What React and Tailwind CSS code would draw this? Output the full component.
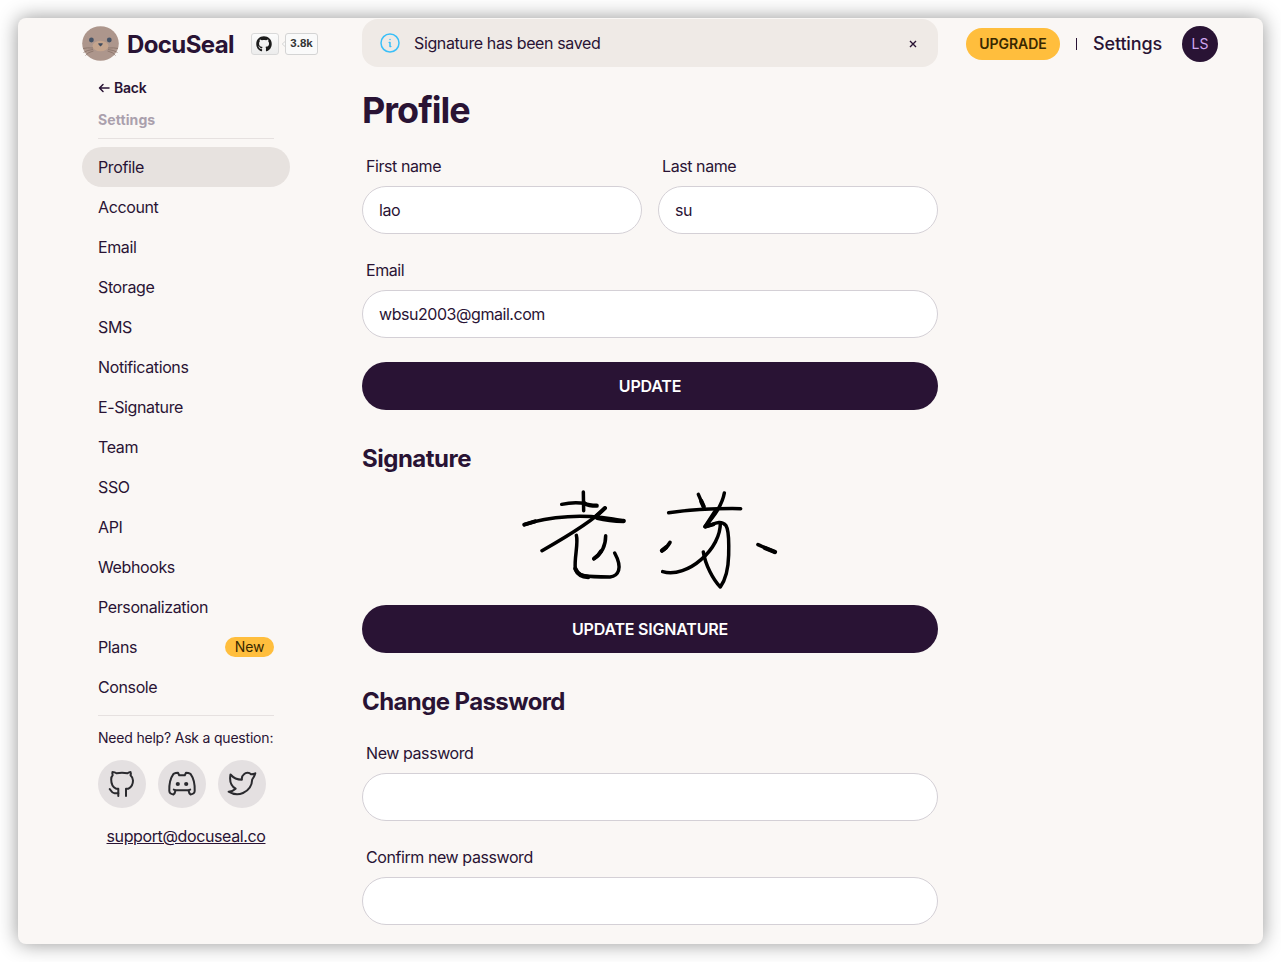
import React from "react";
import { FaGithub } from "react-icons/fa";

const NAV = [
  "Profile", "Account", "Email", "Storage", "SMS", "Notifications", "E-Signature",
  "Team", "SSO", "API", "Webhooks", "Personalization", "Plans", "Console",
];

function SealLogo() {
  return (
    <svg viewBox="0 0 37 35" className="-mt-0.5 h-[35px] w-[37px] shrink-0">
      <ellipse cx="18.5" cy="17.5" rx="18.3" ry="17.2" fill="#ad968c" />
      <ellipse cx="18.5" cy="20" rx="8" ry="5.2" fill="#c4a48d" />
      <circle cx="9.4" cy="14" r="2.4" fill="#465366" />
      <circle cx="27.3" cy="14" r="2.4" fill="#465366" />
      <path d="M16.2 17.3h4.6q.2 1.6-2.3 3.2q-2.5-1.6-2.3-3.2z" fill="#414c5e" />
      <path
        d="M11 22Q5 21.500 1 22.500M11 23.500Q5 24 1.500 26.500M11.500 25Q6 26 3.500 29.500M26 22Q32 21.500 36 22.500M26 23.500Q32 24 35.500 26.500M25.500 25Q31 26 33.500 29.500"
        fill="none" stroke="#806a60" strokeWidth=".7"
      />
    </svg>
  );
}

function Header() {
  return (
    <header className="flex h-[52px] shrink-0 items-center pl-16">
      <div className="flex w-[280px] items-center">
        <SealLogo />
        <span className="ml-2 mt-px w-[124px] text-2xl font-bold tracking-[-0.6px]">DocuSeal</span>
        <span className="flex h-[22px] w-7 items-center justify-center rounded-[3px] border border-[#d9d9d9] bg-linear-to-b from-[#fcfcfc] to-[#ececec]">
          <FaGithub className="mr-0.5 size-4 text-[#1c1c1c]" />
        </span>
        <svg viewBox="0 0 6 10" className="-mr-px ml-[2px] h-2.5 w-[5px] shrink-0">
          <path d="M6 1L1.500 5L6 9" fill="#fafafa" stroke="#cfcfcf" />
        </svg>
        <span className="flex h-[22px] w-[33px] items-center justify-center rounded-[3px] border border-[#d4d4d4] bg-[#fafafa] font-['Liberation_Sans',sans-serif] text-[11.5px] font-bold text-[#333]">3.8k</span>
      </div>
      <div className="mt-px flex h-12 w-[576px] items-center self-start rounded-2xl bg-[#efeae6] pl-4 pr-[21px]">
        <svg viewBox="0 0 24 24" className="size-6" fill="none" stroke="#3abff8" strokeWidth="1.5" strokeLinecap="round" strokeLinejoin="round">
          <circle cx="12" cy="12" r="9" />
          <path d="M12 8.500h.01M11.200 11.500h.8v4h.8" />
        </svg>
        <span className="ml-3 flex-1 text-base tracking-[-0.38px]">Signature has been saved</span>
        <svg viewBox="0 0 8 8" className="mt-0.5 size-2">
          <path d="M1 1L7 7M7 1L1 7" stroke="#291334" strokeWidth="1.4" />
        </svg>
      </div>
      <div className="ml-7 flex h-8 w-[94px] items-center justify-center rounded-full bg-[#ffbe3d] text-sm font-semibold tracking-[-0.05px] text-[#382800]">UPGRADE</div>
      <div className="ml-4 h-3 w-px bg-[#291334]" />
      <span className="ml-4 w-[89px] text-lg font-medium tracking-[-0.15px]">Settings</span>
      <div className="flex size-9 items-center justify-center rounded-full bg-[#291334] text-sm text-[#d1a6f0]">LS</div>
    </header>
  );
}

function RoundIcon({ children }) {
  return (
    <span className="size-12 rounded-full bg-[#e4e0e1]">
      <svg viewBox="0 0 48 48" className="size-12" fill="none" stroke="#2a2a2e" strokeWidth="2" strokeLinecap="round" strokeLinejoin="round">
        {children}
      </svg>
    </span>
  );
}

function Sidebar() {
  return (
    <aside className="w-[208px] shrink-0 pt-2">
      <div className="px-4">
        <div className="flex h-5 items-center text-sm font-semibold tracking-[-0.2px]">
          <svg viewBox="0 0 12 10" className="mr-1 h-2.5 w-3" fill="none" stroke="#291334" strokeWidth="1.5" strokeLinecap="round" strokeLinejoin="round">
            <path d="M11 5H1.500M5 1.500L1.500 5L5 8.500" />
          </svg>
          Back
        </div>
        <div className="mt-3 h-5 text-sm font-bold leading-5 tracking-[0.1px] text-[#aaa0ad]">Settings</div>
        <div className="mt-2 h-px bg-[#e6e1e0]" />
      </div>
      <nav className="mt-2">
        {NAV.map((name, i) => (
          <div
            key={name}
            className={
              "flex h-10 items-center justify-between rounded-full px-4 text-base tracking-[-0.38px] " +
              (i === 0 ? "bg-[#e7e2df]" : "")
            }
          >
            {name}
            {name === "Plans" && (
              <span className="flex h-5 w-[49px] items-center justify-center rounded-full bg-[#ffbe3d] text-sm tracking-[-0.1px] text-[#382800]">New</span>
            )}
          </div>
        ))}
      </nav>
      <div className="px-4">
        <div className="mt-2 h-px bg-[#e6e1e0]" />
        <div className="mt-3 h-5 whitespace-nowrap text-sm leading-5 tracking-[-0.2px]">Need help? Ask a question:</div>
        <div className="mt-3 flex gap-3">
          <RoundIcon>
            <path d="M20.300 36V28.700H18C15.500 27.500 13.200 24 13.200 19.500C13.200 17.500 13.800 16 14.700 15.200C14.200 14 14.200 12.800 14.500 11.900C16 11.900 17.300 12.300 18.500 13.300C22 12.700 26 12.700 29.500 13.300C30.700 12.300 31.500 11.900 32.500 11.900C33 13 33 14 32.500 15.200C34.500 17 35 18.500 35 20.500C35 24 33.500 27 30.500 28.700H28V36" />
            <path d="M11.700 29C13 30 13.500 33.200 16.500 33.200H20.300" />
          </RoundIcon>
          <RoundIcon>
            <path d="M17.500 30.300H30.500C30.800 32 31 33.500 32.500 34.500C34.500 34.200 36.500 33.800 36.700 31C36.900 25 35.500 18 32.500 13.900C31 13.100 29.500 12.800 28 12.800L26.800 15.300H21.200L20 12.800C18.500 12.800 17 13.100 15.500 13.900C12.500 18 11.100 25 11.300 31C11.500 33.800 13.500 34.200 15.500 34.500C17 33.500 17.200 32 17.500 30.300M17.500 30.300L15.800 29.600M30.500 30.300L32.200 29.600" />
            <circle cx="19.800" cy="24" r="2.100" fill="#2a2a2e" stroke="none" />
            <circle cx="28.200" cy="24" r="2.100" fill="#2a2a2e" stroke="none" />
          </RoundIcon>
          <RoundIcon>
            <path d="M37.300 13.300C36 14 34.500 14.200 33 14.200C31.300 12.500 28 12.300 26 14.200C24.300 15.500 23.600 17.500 23.900 19.700C19.500 19.700 15.500 18 12.500 14.500C11.500 20 12.300 25.500 17.600 28.700C15.500 30.700 13 31.600 10.600 31.700C15.500 34.700 20.500 35 25 33C30.500 30.500 34 25.500 34.200 19.500C35.600 17.600 36.700 15.700 37.300 13.300Z" />
          </RoundIcon>
        </div>
        <div className="mt-4 text-center text-base tracking-[-0.38px] underline">support@docuseal.co</div>
      </div>
    </aside>
  );
}

function Field({ label, value }) {
  return (
    <label className="block flex-1">
      <span className="flex h-10 items-center px-1 text-base tracking-[-0.42px]">{label}</span>
      <span className="flex h-12 items-center rounded-full border border-[#d4d0d6] bg-white px-4 text-base tracking-[-0.45px]">{value}</span>
    </label>
  );
}

function Button({ children }) {
  return (
    <button className="block h-12 w-full rounded-full bg-[#291334] text-base font-semibold tracking-[-0.2px] text-white">{children}</button>
  );
}

function Signature() {
  return (
    <svg viewBox="0 0 840 360" className="mx-auto h-[120px] w-[280px]" fill="none" stroke="#000" strokeWidth="10.5" strokeLinecap="round" strokeLinejoin="round">
      <path d="M220 36L221 92" />
      <path d="M155 73C180 67 205 67 225 70" />
      <path d="M222 70C232 75 246 77 260 77" strokeWidth="13" />
      <path d="M43 134C110 110 225 98 341 123" />
      <path d="M43 134L75 124" strokeWidth="12" />
      <path d="M285 84C250 122 170 170 96 212" />
      <path d="M285 84L258 109" strokeWidth="12" />
      <path d="M262 114C285 120 315 123 341 123" strokeWidth="13" />
      <path d="M199 166C206 190 192 235 196 266C202 290 230 291 300 291C325 288 339 265 314 219" />
      <path d="M287 167C287 192 279 218 252 236" />
      <path d="M272 215C266 226 260 231 252 236" strokeWidth="12" />
      <path d="M196 266C203 284 215 290 235 291" strokeWidth="13" />
      <g transform="translate(420 0)">
        <path d="M145 43L161 80" />
        <path d="M154 64L161 80" strokeWidth="13" />
        <path d="M223 39C216 78 190 110 165 140C185 137 210 116 228 137C239 155 236 190 236 225C235 265 226 300 211 321C190 300 166 255 160 216" />
        <path d="M56 98C130 88 205 85 272 86" />
        <path d="M198 90L166 140L190 133" strokeWidth="12" />
        <path d="M211 128C212 165 190 208 153 239C120 268 75 286 38 275" />
        <path d="M60 187C54 198 47 206 36 212" strokeWidth="11" />
        <path d="M48 202L36 212" strokeWidth="13" />
        <path d="M324 194C340 202 355 207 374 216" strokeWidth="11" />
        <path d="M345 204L375 216" strokeWidth="13" />
      </g>
    </svg>
  );
}

export default function App() {
  return (
    <div className="h-[962px] w-[1281px] overflow-hidden bg-white px-[18px] pt-[18px] font-['Inter',sans-serif] text-[#291334]">
      <div className="flex h-[926px] flex-col overflow-hidden rounded-lg bg-[#faf7f5] shadow-[0_0_20px_rgba(0,0,0,0.42)]">
        <Header />
        <div className="flex min-h-0 flex-1 gap-[72px] pl-16">
          <Sidebar />
          <main className="w-[576px] shrink-0 pt-5">
            <h1 className="h-10 text-4xl font-bold leading-[41px] tracking-[-1px]">Profile</h1>
            <div className="mt-4 flex gap-4">
              <Field label="First name" value="lao" />
              <Field label="Last name" value="su" />
            </div>
            <div className="mb-6 mt-4"><Field label="Email" value="wbsu2003@gmail.com" /></div>
            <Button>UPDATE</Button>
            <h2 className="mt-8 h-8 text-2xl font-bold leading-[34px] tracking-[-0.5px]">Signature</h2>
            <div className="mb-[5px] mt-1.5"><Signature /></div>
            <Button>UPDATE SIGNATURE</Button>
            <h2 className="mb-4 mt-8 h-8 text-2xl font-bold leading-[34px] tracking-[-0.6px]">Change Password</h2>
            <div className="flex flex-col gap-4">
              <Field label="New password" value="" />
              <Field label="Confirm new password" value="" />
            </div>
          </main>
        </div>
      </div>
    </div>
  );
}
